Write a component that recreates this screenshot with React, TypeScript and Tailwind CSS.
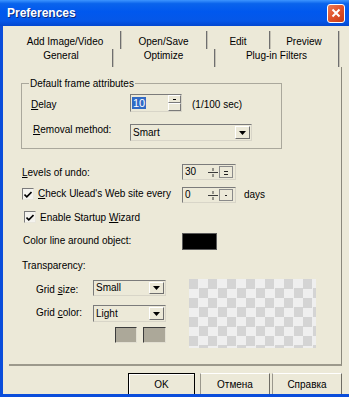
import React from "react";

const BG = "bg-[#ece9d8]";

function Sunken({ className = "", children }: { className?: string; children?: React.ReactNode }) {
  return (
    <div
      className={`border border-t-[#7b7b7b] border-l-[#7b7b7b] border-b-[#d8d5c8] border-r-[#d8d5c8] ${BG} ${className}`}
    >
      {children}
    </div>
  );
}

function DropBtn() {
  return (
    <div className="w-[15px] h-full flex items-center justify-center border border-t-white border-l-white border-b-[#6f6f6f] border-r-[#6f6f6f] bg-[#ece9d8]">
      <svg width="7" height="4" viewBox="0 0 7 4">
        <path d="M0 0h7L3.5 4z" fill="#000" />
      </svg>
    </div>
  );
}

function Combo({ text, w, h }: { text: string; w: string; h: string }) {
  return (
    <Sunken className={`${w} ${h} flex items-stretch`}>
      <div className="flex-1 pl-[2px] flex items-center leading-[12px]">{text}</div>
      <div className="py-[1px] pr-[1px] h-full">
        <DropBtn />
      </div>
    </Sunken>
  );
}

function SmallSpin({ value, mark }: { value: string; mark: "pm" | "dash" }) {
  return (
    <Sunken className="w-[54px] h-[16px] flex items-center">
      <div className="w-[25px] pl-[2px] leading-[12px]">{value}</div>
      <svg width="10" height="12" viewBox="0 0 10 12" className="ml-[0px]">
        <path d="M0 6.5h10M5 2v3M5 8v3" stroke="#3a3a3a" strokeWidth="1" />
      </svg>
      <div className="ml-[1px] w-[14px] h-[12px] border border-[#8a8a8a] flex items-center justify-center">
        <svg width="6" height="6" viewBox="0 0 6 6">
          {mark === "pm" ? (
            <path d="M1 2.5h4M1 5.5h4" stroke="#222" strokeWidth="1" />
          ) : (
            <path d="M2 3.5h2" stroke="#222" strokeWidth="1" />
          )}
        </svg>
      </div>
    </Sunken>
  );
}

function Check() {
  return (
    <div className="w-[12px] h-[12px] border border-t-[#7b7b7b] border-l-[#7b7b7b] border-b-[#e8e6dc] border-r-[#e8e6dc] bg-[#f4f3ee] flex items-center justify-center">
      <svg width="8" height="7" viewBox="0 0 8 7">
        <path d="M0.5 3.5l2.3 2.3L7.5 1" stroke="#000" strokeWidth="1.6" fill="none" />
      </svg>
    </div>
  );
}

export default function App() {
  return (
    <div className="w-[349px] h-[397px] bg-[#0a4ddb] flex flex-col overflow-hidden font-['Liberation_Sans',Arial,sans-serif] text-[10px] leading-[12px] text-black">
      {/* Title bar */}
      <div className="h-[26px] shrink-0 flex items-center pl-[7px] pr-[4px] bg-[linear-gradient(to_bottom,#3d95ff_0%,#0a64ec_14%,#0058ee_45%,#0557e8_80%,#0347d0_100%)]">
        <span className="text-white font-bold text-[12px] leading-[14px] [text-shadow:1px_1px_0_#0a2a80]">
          Preferences
        </span>
        <div className="ml-auto w-[18px] h-[19px] rounded-[3px] border border-white bg-[linear-gradient(135deg,#ea7a55_0%,#e0522a_50%,#c53d18_100%)] flex items-center justify-center">
          <svg width="10" height="10" viewBox="0 0 10 10">
            <path d="M1.5 1.5l7 7M8.5 1.5l-7 7" stroke="#fff" strokeWidth="2" />
          </svg>
        </div>
      </div>

      {/* Body */}
      <div className={`ml-[3px] h-[368px] shrink-0 overflow-hidden ${BG} flex flex-col`}>
        {/* Tabs */}
        <div className="pt-[5px] pl-[7px]">
          <div className="flex h-[18px]">
            {[
              ["Add Image/Video", "w-[111px]"],
              ["Open/Save", "w-[86px]"],
              ["Edit", "w-[63px]"],
              ["Preview", "w-[69px]"],
            ].map(([t, w]) => (
              <div
                key={t}
                className={`${w} h-full pt-[5px] text-center border-r border-r-[#6f6f6f] shadow-[1px_0_0_#c4c1b4]`}
              >
                {t}
              </div>
            ))}
          </div>
          <div className="flex h-[18px]">
            {[
              ["General", "w-[103px]"],
              ["Optimize", "w-[102px]"],
              ["Plug-in Filters", "w-[124px]"],
            ].map(([t, w]) => (
              <div
                key={t}
                className={`${w} h-full pt-[1px] text-center border-r border-r-[#6f6f6f] shadow-[1px_0_0_#c4c1b4]`}
              >
                {t}
              </div>
            ))}
          </div>
        </div>

        {/* Panel */}
        <div className="ml-[6px] w-[333px] h-[299px] shrink-0 border-r border-r-[#8a887c] border-b-2 border-b-[#9c998c] pl-[12px] flex flex-col">
          {/* Group box */}
          <div className="relative mt-[16px] w-[261px] h-[66px] border border-[#aaa89c] pt-[10px] flex flex-col">
            <span className={`absolute left-[7px] top-[-6px] px-[1px] ${BG}`}>Default frame attributes</span>
            <div className="flex items-start h-[18px]">
              <div className="w-[108px] pl-[9px] mt-[5px]">
                <u className="underline-offset-1">D</u>elay
              </div>
              <Sunken className="w-[52px] h-[18px] flex items-stretch">
                <div className="flex-1 pl-[1px] pt-[2px]">
                  <span className="bg-[#316ac5] text-white px-[1px] text-[11px] leading-[12px]">10</span>
                </div>
                <div className="w-[13px] flex flex-col">
                  <div className="flex-1 border border-t-white border-l-white border-b-[#7a7a7a] border-r-[#7a7a7a] flex items-center justify-center">
                    <div className="w-[3px] h-[1px] bg-black" />
                  </div>
                  <div className="flex-1 border border-t-white border-l-white border-b-[#7a7a7a] border-r-[#7a7a7a]" />
                </div>
              </Sunken>
              <div className="ml-[10px] mt-[5px]">(1/100 sec)</div>
            </div>
            <div className="flex items-start mt-[12px] h-[17px]">
              <div className="w-[108px] pl-[11px]">
                <u className="underline-offset-1">R</u>emoval method:
              </div>
              <Combo text="Smart" w="w-[122px]" h="h-[17px]" />
            </div>
          </div>

          {/* Levels of undo */}
          <div className="flex items-start mt-[15px] h-[16px]">
            <div className="w-[161px] pl-[1px] mt-[3px]">
              <u className="underline-offset-1">L</u>evels of undo:
            </div>
            <SmallSpin value="30" mark="pm" />
          </div>

          {/* Check website */}
          <div className="flex items-start mt-[7px] h-[16px]">
            <div className="w-[161px] flex items-start">
              <div className="ml-[1px] mt-[1px]">
                <Check />
              </div>
              <div className="ml-[4px] mt-[1px]">
                <u className="underline-offset-1">C</u>heck Ulead's Web site every
              </div>
            </div>
            <SmallSpin value="0" mark="dash" />
            <div className="ml-[8px] mt-[2px]">days</div>
          </div>

          {/* Startup wizard */}
          <div className="flex items-start mt-[7px] h-[14px]">
            <div className="ml-[3px] mt-[1px]">
              <Check />
            </div>
            <div className="ml-[4px] mt-[2px]">
              Enable Startup <u className="underline-offset-1">W</u>izard
            </div>
          </div>

          {/* Color line */}
          <div className="flex items-start mt-[9px] h-[17px]">
            <div className="w-[161px] pl-[2px] mt-[2px]">Color line around object:</div>
            <div className="w-[35px] h-[17px] bg-black border border-[#5a5a5a]" />
          </div>

          {/* Transparency */}
          <div className="mt-[10px] h-[12px] pl-[1px]">Transparency:</div>

          {/* Grid area */}
          <div className="flex mt-[7px]">
            <div className="w-[145px] flex flex-col">
              <div className="flex items-start mt-[1px] h-[16px]">
                <div className="w-[72px] pl-[15px] mt-[4px]">
                  Grid <u className="underline-offset-1">s</u>ize:
                </div>
                <Combo text="Small" w="w-[73px]" h="h-[16px]" />
              </div>
              <div className="flex items-start mt-[9px] h-[17px]">
                <div className="w-[72px] pl-[15px] mt-[2px]">
                  Grid <u className="underline-offset-1">c</u>olor:
                </div>
                <Combo text="Light" w="w-[73px]" h="h-[17px]" />
              </div>
              <div className="flex mt-[5px] ml-[94px] gap-[6px]">
                <div className="w-[22px] h-[16px] bg-[#aca899] border border-t-[#3c3c3c] border-l-[#3c3c3c] border-b-[#e2dfd2] border-r-[#e2dfd2]" />
                <div className="w-[23px] h-[16px] bg-[#aca899] border border-t-[#3c3c3c] border-l-[#3c3c3c] border-b-[#e2dfd2] border-r-[#e2dfd2]" />
              </div>
            </div>
            <div className="ml-[23px] w-[127px] h-[69px] bg-[image:conic-gradient(#efefef_25%,#d4d4d4_0_50%,#efefef_0_75%,#d4d4d4_0)] bg-size-[19px_19px]" />
          </div>
        </div>

        {/* Buttons */}
        <div className="flex justify-end pr-[7px] mt-[7px]">
          <div className="w-[67px] h-[23px] border border-black flex items-center justify-center shadow-[inset_1px_1px_0_#fff]">
            OK
          </div>
          <div className="ml-[5px] w-[70px] h-[23px] border border-t-white border-l-[#9a978c] border-r-[#6e6c64] border-b-[#6e6c64] flex items-center justify-center">
            Отмена
          </div>
          <div className="ml-[2px] w-[70px] h-[23px] border border-t-white border-l-[#9a978c] border-r-[#6e6c64] border-b-[#6e6c64] flex items-center justify-center">
            Справка
          </div>
        </div>
      </div>
    </div>
  );
}
